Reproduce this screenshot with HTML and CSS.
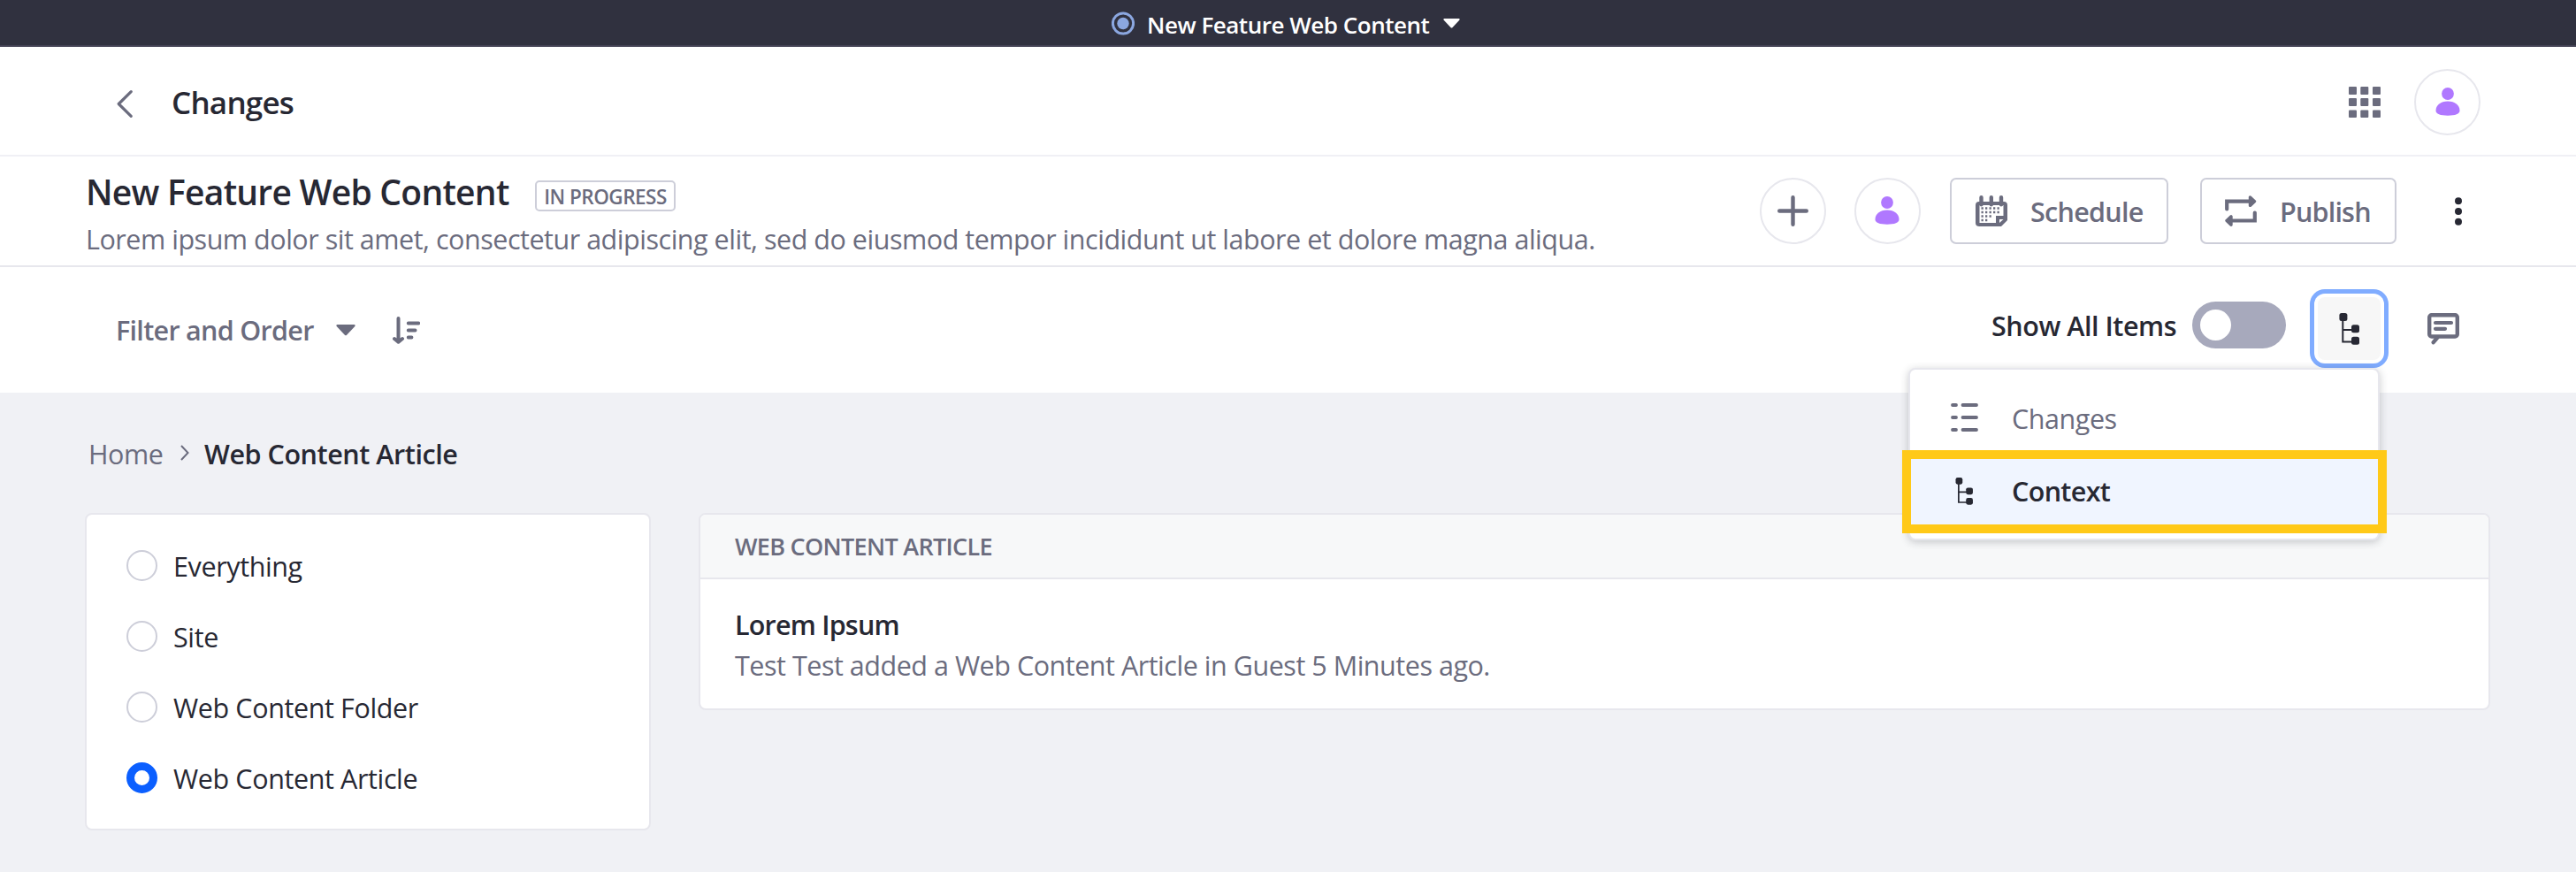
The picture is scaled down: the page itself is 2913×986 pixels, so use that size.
FILE: index.html
```html
<!DOCTYPE html>
<html lang="en">
<head>
<meta charset="utf-8">
<title>Changes</title>
<link rel="stylesheet" href="styles.css">
</head>
<body>
<svg class="defs" width="0" height="0">
  <symbol id="user" viewBox="0 0 28 33">
    <circle cx="14" cy="7" r="6.9"/>
    <path d="M14 15.500c8 0 13.500 4.500 13.500 10.500 0 4-5 5.700-13.500 5.700S.5 30 .5 26C.5 20 6 15.500 14 15.500z"/>
  </symbol>
  <symbol id="tree" viewBox="0 0 24 36">
    <path d="M4.300 5v27.500H16M4.300 19H16" fill="none" stroke="currentColor" stroke-width="2"/>
    <rect x=".4" y="0" width="9" height="9" rx="2.500"/>
    <rect x="14" y="13.300" width="9" height="9" rx="2.500"/>
    <rect x="14" y="26.700" width="9" height="9" rx="2.500"/>
  </symbol>
</svg>

<div class="publication-bar">
  <svg class="status-dot" viewBox="0 0 26 27"><circle cx="13" cy="13.500" r="11.600" fill="none" stroke="currentColor" stroke-width="3"/><circle cx="13" cy="13.500" r="6.700"/></svg>
  <span class="publication-name">New Feature Web Content</span>
  <svg class="bar-caret" viewBox="0 0 19 11"><path d="M1.300 0h16.400q1.500.3.600 1.700l-8 8.500q-.8.700-1.600 0l-8-8.500Q-.2.300 1.300 0z"/></svg>
</div>

<header class="control-menu">
  <svg class="back" viewBox="0 0 18 31"><path d="M16.200 1.700L2.200 15.500l14 13.800" fill="none" stroke="currentColor" stroke-width="3.200" stroke-linecap="round" stroke-linejoin="round"/></svg>
  <h1 class="page-title">Changes</h1>
  <svg class="apps" viewBox="0 0 36 35"><g><rect width="9" height="9" rx="1"/><rect x="13.300" width="9" height="9" rx="1"/><rect x="27" width="9" height="9" rx="1"/><rect y="13" width="9" height="9" rx="1"/><rect x="13.300" y="13" width="9" height="9" rx="1"/><rect x="27" y="13" width="9" height="9" rx="1"/><rect y="26.500" width="9" height="8.500" rx="1"/><rect x="13.300" y="26.500" width="9" height="8.500" rx="1"/><rect x="27" y="26.500" width="9" height="8.500" rx="1"/></g></svg>
  <span class="avatar"><svg class="user-icon"><use href="#user"/></svg></span>
</header>

<section class="publication">
  <div class="summary">
    <div class="heading"><h2 class="title">New Feature Web Content</h2><span class="badge">IN PROGRESS</span></div>
    <p class="description">Lorem ipsum dolor sit amet, consectetur adipiscing elit, sed do eiusmod tempor incididunt ut labore et dolore magna aliqua.</p>
  </div>
  <div class="actions">
    <span class="avatar"><svg class="plus" viewBox="0 0 35 35"><path d="M17.500 2.200v30.600M2.200 17.500h30.600" stroke="currentColor" stroke-width="4.400" stroke-linecap="round"/></svg></span>
    <span class="avatar second"><svg class="user-icon"><use href="#user"/></svg></span>
    <button class="btn schedule">
      <svg class="btn-icon" viewBox="0 0 36 35">
        <path d="M6.500 2.200v8M17.800 2.200v8M29 2.200v8" stroke="currentColor" stroke-width="4.400" stroke-linecap="round"/>
        <path fill-rule="evenodd" d="M4 7h28q4 0 4 4v17l-7 7H4q-4 0-4-4V11q0-4 4-4zM4.500 11v20H23v-8h8.500V11zM27 27v4l4.500-4z"/>
        <path d="M6.500 14.500h21.500M6.500 19h21.500M6.500 23.500h13M6.500 28h8" stroke="currentColor" stroke-width="2.300" stroke-dasharray="2.300 2.200"/>
      </svg>
      <span class="schedule-label">Schedule</span>
    </button>
    <button class="btn publish">
      <svg class="btn-icon" viewBox="0 0 36 35">
        <path d="M2.200 15.500V6.700H30M33.800 19.500v9H6" fill="none" stroke="currentColor" stroke-width="4.200" stroke-linecap="round"/>
        <path d="M28.500 2v9.400l5-4.700zM7 23.800v9.400l-5-4.700z" stroke="currentColor" stroke-width="3.400" stroke-linejoin="round"/>
      </svg>
      <span class="publish-label">Publish</span>
    </button>
    <svg class="kebab" viewBox="0 0 8 32"><circle cx="4" cy="4.300" r="4"/><circle cx="4" cy="16" r="4"/><circle cx="4" cy="27.700" r="4"/></svg>
  </div>
</section>

<section class="toolbar">
  <span class="filter">Filter and Order</span>
  <svg class="filter-caret" viewBox="0 0 22 13"><path d="M1.500 0h19q1.700.3.800 1.900l-9.400 10q-.9.900-1.800 0L.7 1.900Q-.2.300 1.500 0z"/></svg>
  <svg class="sort" viewBox="0 0 31 31">
    <path d="M6.500 2v26M2 25l4.500 3.800L11 25" fill="none" stroke="currentColor" stroke-width="4" stroke-linecap="round" stroke-linejoin="round"/>
    <path d="M17.700 7.500h11.600M17.700 15.500h7.900M17.700 23.500h3.800" stroke="currentColor" stroke-width="3.800" stroke-linecap="round"/>
  </svg>
  <div class="view-tools">
    <span class="show-all">Show All Items</span>
    <span class="toggle"><span class="knob"></span></span>
    <div class="view-picker">
      <button class="view-button"><svg class="tree-large"><use href="#tree"/></svg></button>
      <div class="menu">
        <div class="menu-item">
          <svg class="list-icon" viewBox="0 0 31 32"><path d="M2 2h4M13.500 2H29M2 16h4M13.500 16H29M2 30h4M13.500 30H29" stroke="currentColor" stroke-width="3.800" stroke-linecap="round"/></svg>
          <span class="changes-label">Changes</span>
        </div>
        <div class="menu-item active">
          <svg class="tree-small"><use href="#tree"/></svg>
          <span class="context-label">Context</span>
        </div>
      </div>
    </div>
    <svg class="chat" viewBox="0 0 36 36">
      <rect x="2.200" y="2.200" width="31.600" height="24.300" rx="2.500" fill="none" stroke="currentColor" stroke-width="4.400"/>
      <path d="M11 28l-4.300 5.200" stroke="currentColor" stroke-width="4.400" stroke-linecap="round"/>
      <path d="M9 11h18M9 17.800h11" stroke="currentColor" stroke-width="4.200" stroke-linecap="round"/>
    </svg>
  </div>
</section>

<main class="content">
  <nav class="breadcrumb">
    <span class="home">Home</span>
    <svg class="crumb-arrow" viewBox="0 0 10 18"><path d="M1 1l7.500 8L1 17" fill="none" stroke="currentColor" stroke-width="2"/></svg>
    <span class="current">Web Content Article</span>
  </nav>
  <div class="columns">
    <aside class="card filters">
      <label class="option"><span class="radio"></span>Everything</label>
      <label class="option"><span class="radio"></span>Site</label>
      <label class="option"><span class="radio"></span>Web Content Folder</label>
      <label class="option"><span class="radio checked"></span>Web Content Article</label>
    </aside>
    <section class="card results">
      <div class="results-head">WEB CONTENT ARTICLE</div>
      <div class="result">
        <div class="result-title">Lorem Ipsum</div>
        <div class="result-text">Test Test added a Web Content Article in Guest 5 Minutes ago.</div>
      </div>
    </section>
  </div>
</main>
</body>
</html>
```
FILE: styles.css
```css
* { box-sizing: border-box; }
body {
  margin: 0;
  height: 986px;
  overflow: hidden;
  background: #f0f1f5;
  color: #272833;
  font: 400 30.5px/44px "Open Sans", "Noto Sans", sans-serif;
  white-space: nowrap;
}
svg { display: block; flex: none; fill: currentColor; }
h1, h2, p { margin: 0; }
.defs { position: absolute; }

.publication-bar {
  display: flex;
  justify-content: center;
  align-items: center;
  height: 53px;
  padding-right: 5px;
  background: #30313f;
  border-bottom: 2px solid #434254;
  color: #fff;
}
.status-dot { width: 26px; height: 27px; margin-top: 2px; color: #8ba7e0; }
.publication-name {
  margin: 5px 0 0 14px;
  width: 319px;
  font-size: 26px;
  font-weight: 600;
  letter-spacing: -0.48px;
}
.bar-caret { width: 19px; height: 11px; margin: 1px 0 0 16px; }

.control-menu {
  display: flex;
  align-items: center;
  height: 124px;
  padding: 3px 108px 0 132px;
  background: #fff;
  border-bottom: 2px solid #f0f0f5;
  color: #6b6c7e;
}
.back { width: 18px; height: 31px; margin-top: 4px; }
.page-title {
  margin: 1px 0 0 44px;
  color: #272833;
  font-size: 35px;
  font-weight: 600;
  letter-spacing: -0.78px;
}
.apps { width: 36px; height: 35px; margin-left: auto; margin-right: 38px; }

.avatar {
  display: flex;
  justify-content: center;
  align-items: center;
  flex: none;
  width: 75px;
  height: 75px;
  border: 2px solid #e7e7ed;
  border-radius: 50%;
  color: #6b6c7e;
}
.user-icon { width: 28px; height: 33px; color: #b078ff; }
.plus { width: 35px; height: 35px; }

.publication {
  display: flex;
  justify-content: space-between;
  align-items: center;
  height: 125px;
  padding: 0 129px 0 96px;
  background: #fff;
  border-bottom: 2px solid #e7e7ed;
}
.summary { align-self: flex-start; padding-top: 13px; }
.heading { display: flex; align-items: flex-start; height: 54px; }
.title {
  width: 509px;
  padding-left: 1px;
  font-size: 39px;
  line-height: 54px;
  font-weight: 600;
  letter-spacing: -0.74px;
}
.badge {
  width: 159px;
  height: 35px;
  margin-top: 14px;
  border: 2px solid #cdced9;
  border-radius: 5px;
  color: #6b6c7e;
  font-size: 22.5px;
  line-height: 33px;
  font-weight: 600;
  letter-spacing: -0.52px;
  text-align: center;
}
.description { margin: 4px 0 0 1px; color: #6b6c7e; letter-spacing: -0.475px; }
.actions { display: flex; align-items: center; }
.second { margin-left: 32px; }
.second .user-icon { margin-left: -1px; }
.btn {
  display: flex;
  align-items: center;
  height: 75px;
  padding: 0;
  background: #fff;
  border: 2px solid #cdced9;
  border-radius: 7px;
  color: #6b6c7e;
  font: inherit;
  font-weight: 600;
}
.btn-icon { width: 36px; height: 35px; }
.schedule { width: 247px; margin-left: 33px; padding-left: 27px; }
.publish { width: 222px; margin-left: 36px; padding-left: 26px; }
.schedule-label { margin-left: 26px; letter-spacing: -0.7px; }
.publish-label { margin-left: 26px; letter-spacing: -0.8px; }
.kebab { width: 8px; height: 32px; margin-left: 66px; }

.toolbar {
  display: flex;
  align-items: center;
  height: 142px;
  padding: 0 132px 0 131px;
  background: #fff;
  color: #6b6c7e;
}
.filter { width: 249px; font-weight: 600; letter-spacing: -0.7px; }
.filter-caret { width: 22px; height: 13px; }
.sort { width: 31px; height: 31px; margin-left: 42px; }
.view-tools { display: flex; align-items: center; margin-left: auto; height: 71px; margin-top: -3px; }
.show-all {
  width: 227px;
  margin-top: -7px;
  color: #272833;
  font-weight: 600;
  letter-spacing: -0.46px;
}
.toggle {
  display: flex;
  align-items: center;
  width: 106px;
  height: 53px;
  margin-top: -8px;
  padding-left: 9px;
  background: #a7a9bc;
  border-radius: 27px;
}
.knob { width: 35px; height: 35px; border-radius: 50%; background: #fff; }
.view-picker { position: relative; margin-left: 36px; }
.view-button {
  display: flex;
  justify-content: center;
  align-items: center;
  width: 71px;
  height: 71px;
  padding: 0;
  border: 0;
  border-radius: 8px;
  background: #f7f7f7;
  box-shadow: 0 0 0 4px #fff, 0 0 0 9px #80acff;
  color: #272833;
}
.tree-large { width: 24px; height: 36px; }
.chat { width: 36px; height: 36px; margin-left: 53px; }

.menu {
  position: absolute;
  top: 80px;
  left: -463px;
  width: 533px;
  height: 195px;
  padding-top: 14px;
  background: #fff;
  border: 2px solid #e7e7ed;
  border-radius: 8px;
  box-shadow: 0 2px 10px rgba(39, 40, 51, 0.24);
}
.menu-item { position: relative; display: flex; align-items: center; height: 83px; padding-left: 46px; }
.list-icon { width: 31px; height: 32px; margin-top: -4px; }
.changes-label { margin: -1px 0 0 38px; letter-spacing: -0.45px; }
.active { background: #f0f5ff; color: #272833; font-weight: 600; }
.active::after {
  content: "";
  position: absolute;
  inset: -6px -10px -5px -9px;
  border: 10px solid #ffc918;
}
.tree-small { width: 21px; height: 31px; margin-left: 5px; margin-top: -3px; }
.context-label { margin: -3px 0 0 43px; letter-spacing: -0.65px; }

.content { padding: 47px 97px 0 96px; }
.breadcrumb { display: flex; align-items: center; }
.home { width: 105px; padding-left: 4px; color: #6b6c7e; letter-spacing: -0.4px; }
.crumb-arrow { width: 10px; height: 18px; margin: -3px 0 0 3px; color: #6b6c7e; }
.current { margin-left: 17px; font-weight: 600; letter-spacing: -0.44px; }
.columns { display: flex; align-items: flex-start; gap: 54px; margin-top: 45px; }
.card { background: #fff; border: 2px solid #e7e7ed; border-radius: 8px; }
.filters { flex: none; width: 640px; height: 359px; padding: 18px 0 0 45px; }
.option { display: flex; align-items: center; height: 80px; letter-spacing: -0.38px; }
.radio {
  width: 35px;
  height: 35px;
  margin: -2px 18px 0 0;
  border: 2px solid #cdced9;
  border-radius: 50%;
  background: #fff;
}
.checked { border: 9px solid #0b5fff; }
.results { flex: 1; height: 223px; overflow: hidden; }
.results-head {
  height: 73px;
  padding-left: 39px;
  background: #f7f8f9;
  border-bottom: 2px solid #e7e7ed;
  color: #6b6c7e;
  font-size: 27px;
  line-height: 71px;
  font-weight: 600;
  letter-spacing: -0.7px;
}
.result { padding: 28px 0 0 39px; line-height: 46px; }
.result-title { font-weight: 600; letter-spacing: -0.8px; }
.result-text { color: #6b6c7e; letter-spacing: -0.47px; }
```
